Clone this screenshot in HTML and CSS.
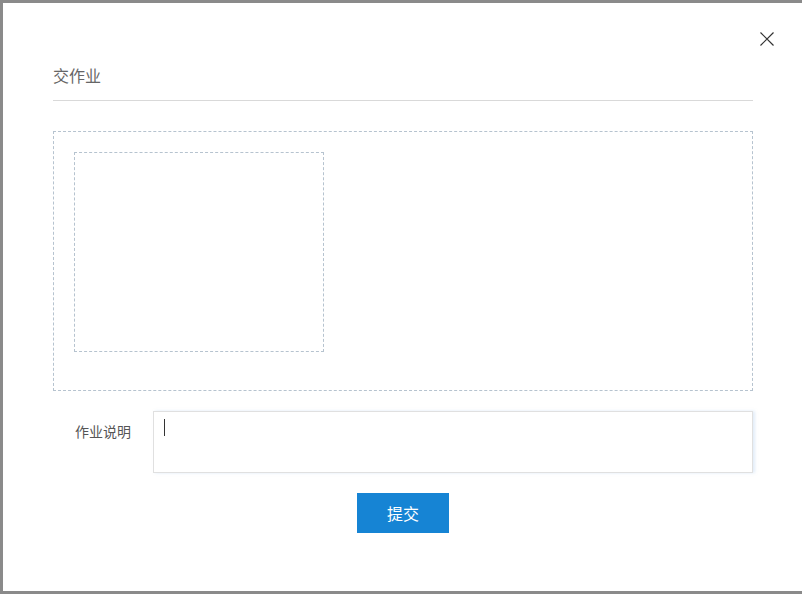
FILE: index.html
```html
<!DOCTYPE html>
<html lang="zh">
<head>
<meta charset="utf-8">
<title>交作业</title>
<link rel="stylesheet" href="styles.css">
</head>
<body>
<div class="modal">
  <button class="close" aria-label="关闭">
    <svg width="16" height="16" viewBox="0 0 16 16"><path d="M1.5 1.5 L14.5 14.5 M14.5 1.5 L1.5 14.5" stroke="#333" stroke-width="1.2" fill="none"/></svg>
  </button>
  <div class="header"><h2 class="title">交作业</h2></div>
  <div class="upload">
    <div class="slot"></div>
  </div>
  <div class="row">
    <label class="label" for="desc">作业说明</label>
    <div class="field"><textarea id="desc" class="input"></textarea><span class="caret"></span></div>
  </div>
  <div class="actions"><button class="submit">提交</button></div>
</div>
</body>
</html>
```
FILE: styles.css
```css
html, body { margin: 0; padding: 0; }
body {
  background: #8a8a8a;
  width: 802px;
  height: 594px;
  overflow: hidden;
  font-family: "Noto Sans CJK SC", "Noto Sans", sans-serif;
  padding: 3px 0 0 3px;
  box-sizing: border-box;
}
.modal {
  position: relative;
  background: #fff;
  width: 800px;
  height: 588px;
  box-sizing: border-box;
  padding: 0 50px 0 50px;
}
.close {
  position: absolute;
  top: 28px;
  right: 28px;
  width: 16px;
  height: 16px;
  padding: 0;
  border: 0;
  background: none;
  display: flex;
}
.header {
  padding: 62px 0 15px;
  border-bottom: 1px solid #d9d9d9;
}
.title {
  margin: 0;
  font-size: 16px;
  line-height: 20px;
  font-weight: normal;
  color: #666;
}
.upload {
  margin-top: 30px;
  height: 260px;
  box-sizing: border-box;
  border: 1px dashed #b6c3cf;
  padding: 20px;
}
.slot {
  width: 250px;
  height: 200px;
  box-sizing: border-box;
  border: 1px dashed #b6c3cf;
}
.row {
  margin-top: 20px;
  display: flex;
  align-items: flex-start;
}
.label {
  width: 100px;
  box-sizing: border-box;
  padding: 10px 22px 0 0;
  text-align: right;
  font-size: 14px;
  line-height: 20px;
  color: #555;
  flex: none;
}
.field {
  position: relative;
  flex: 1;
  box-shadow: 2px 0 3px rgba(170, 200, 235, 0.35);
}
.input {
  display: block;
  width: 100%;
  height: 62px;
  box-sizing: border-box;
  border: 1px solid #e0e0e0;
  padding: 6px 10px;
  resize: none;
  outline: none;
  font-family: inherit;
  font-size: 14px;
  color: #333;
}
.caret {
  position: absolute;
  left: 11px;
  top: 8px;
  width: 1px;
  height: 17px;
  background: #333;
}
.actions {
  margin-top: 20px;
  display: flex;
  justify-content: center;
}
.submit {
  width: 92px;
  height: 40px;
  border: 0;
  background: #1684d4;
  color: #fff;
  font-family: inherit;
  font-size: 16px;
  padding: 0;
}
```
